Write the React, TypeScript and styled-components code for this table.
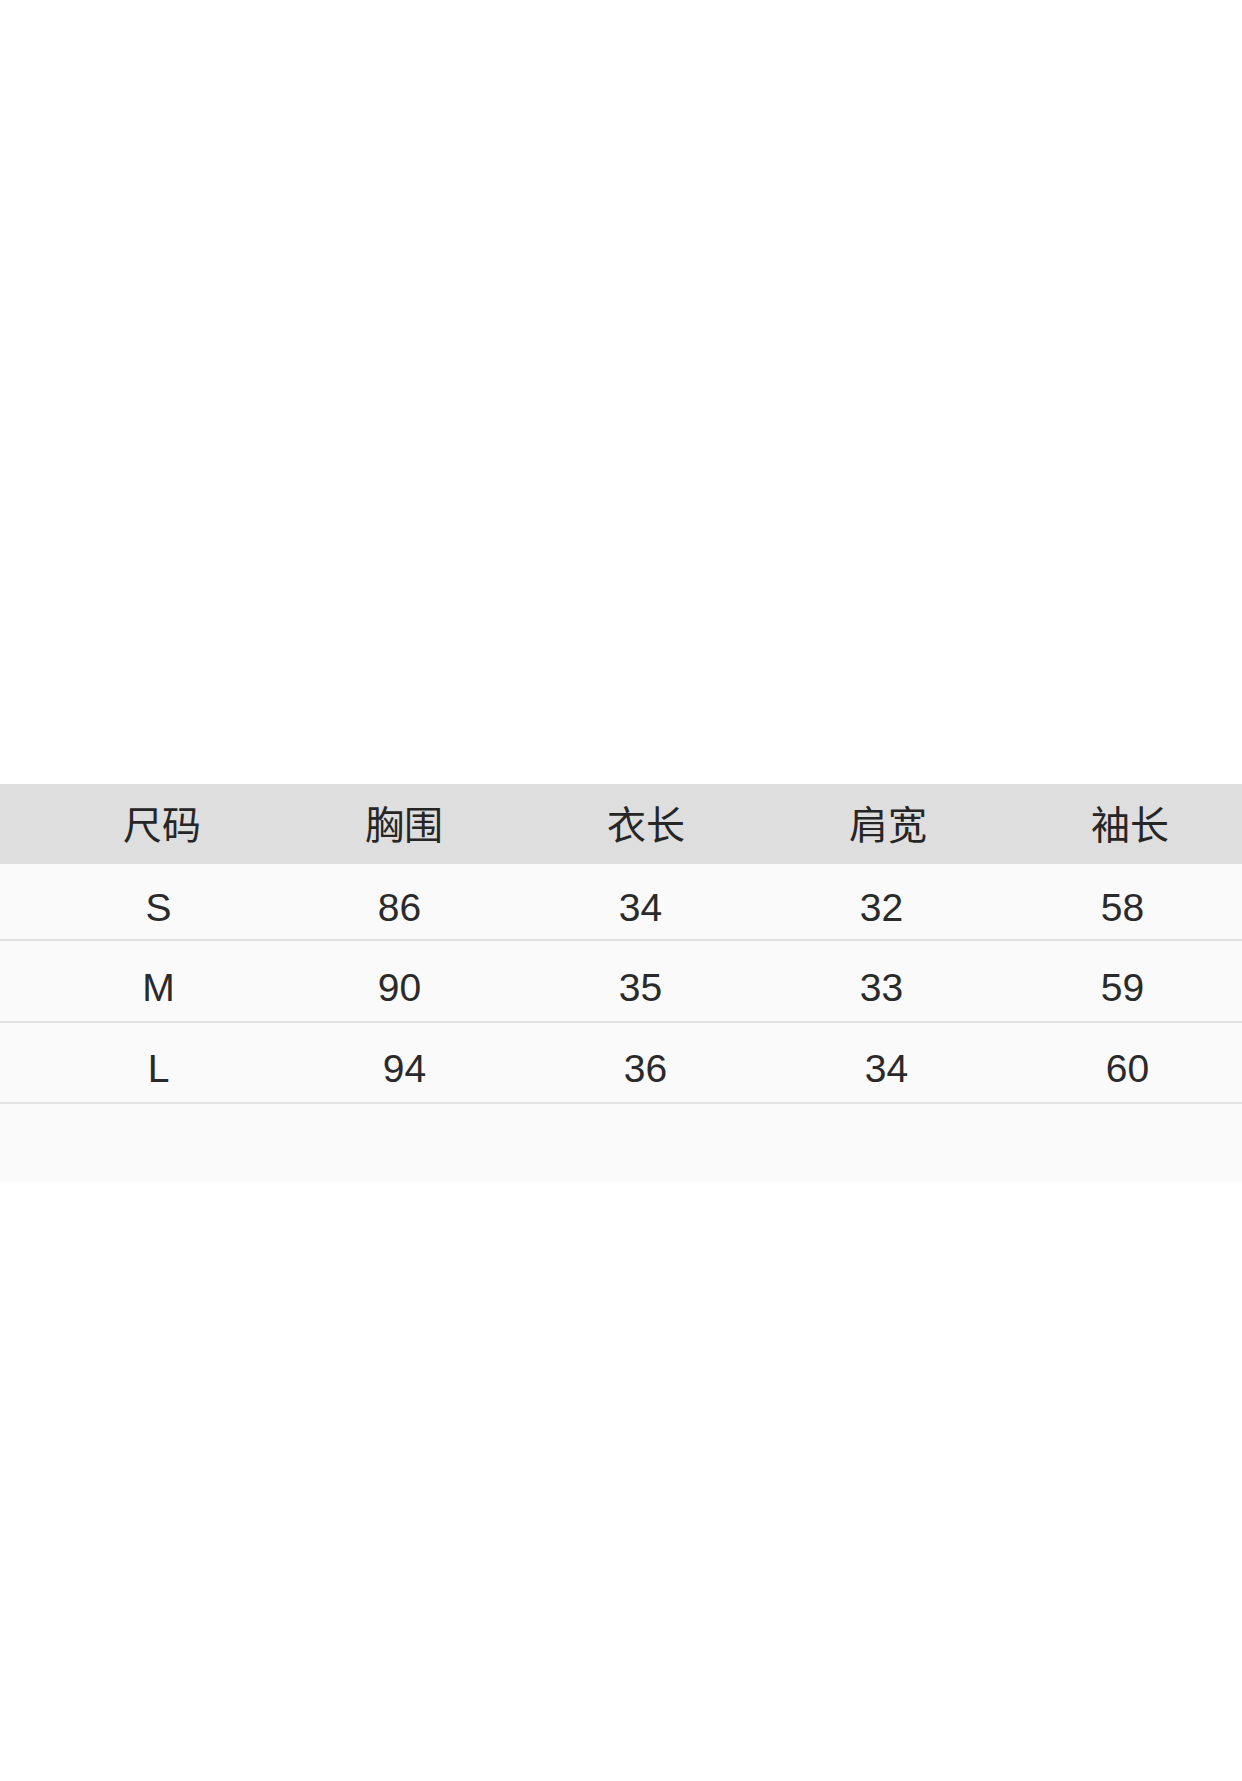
import React from "react";
import styled, { createGlobalStyle } from "styled-components";

const GlobalStyle = createGlobalStyle`
  html, body {
    margin: 0;
    padding: 0;
    background: #ffffff;
  }
`;

const headers = ["尺码", "胸围", "衣长", "肩宽", "袖长"];

// the L row sits a few pixels further right than the others, except its size label
const rows = [
  { cells: ["S", "86", "34", "32", "58"], height: 77, shift: 38 },
  { cells: ["M", "90", "35", "33", "59"], height: 82, shift: 38 },
  { cells: ["L", "94", "36", "34", "60"], height: 81, shift: 43 },
];

export default function App() {
  return (
    <Page>
      <GlobalStyle />
      <SizeTable>
        <HeaderRow>
          {headers.map((h) => (
            <HeaderCell key={h}>{h}</HeaderCell>
          ))}
        </HeaderRow>
        {rows.map((r) => (
          <BodyRow key={r.cells[0]} $height={r.height} $shift={r.shift}>
            {r.cells.map((c, i) => (
              <Cell key={i} $nudge={i === 0 ? r.shift - 38 : 0}>
                {c}
              </Cell>
            ))}
          </BodyRow>
        ))}
        <Tail />
      </SizeTable>
    </Page>
  );
}

const Page = styled.div`
  width: 1242px;
  height: 1781px;
  overflow: hidden;
  background: #ffffff;
  padding-top: 784px;
  box-sizing: border-box;
`;

const SizeTable = styled.div`
  display: flex;
  flex-direction: column;
  background: #fafafa;
`;

const HeaderRow = styled.div`
  display: grid;
  grid-template-columns: repeat(5, 242px);
  align-items: center;
  height: 80px;
  padding-left: 41px;
  padding-bottom: 3px;
  box-sizing: border-box;
  background: #dedede;
`;

const HeaderCell = styled.div`
  text-align: center;
  font-family: "Noto Sans CJK SC", "Noto Sans", sans-serif;
  font-size: 39px;
  line-height: 1;
  color: #262626;
  white-space: nowrap;
`;

const BodyRow = styled.div<{ $height: number; $shift: number }>`
  display: grid;
  grid-template-columns: repeat(5, 241px);
  align-items: center;
  height: ${(p) => p.$height}px;
  padding-left: ${(p) => p.$shift}px;
  padding-top: 12px;
  box-sizing: border-box;
  border-bottom: 2px solid #e2e2e2;
`;

const Cell = styled.div<{ $nudge: number }>`
  text-align: center;
  font-family: "Liberation Sans", Arial, sans-serif;
  font-size: 39px;
  line-height: 1;
  color: #2a2a2a;
  margin-right: ${(p) => p.$nudge * 2}px;
`;

const Tail = styled.div`
  height: 78px;
`;
